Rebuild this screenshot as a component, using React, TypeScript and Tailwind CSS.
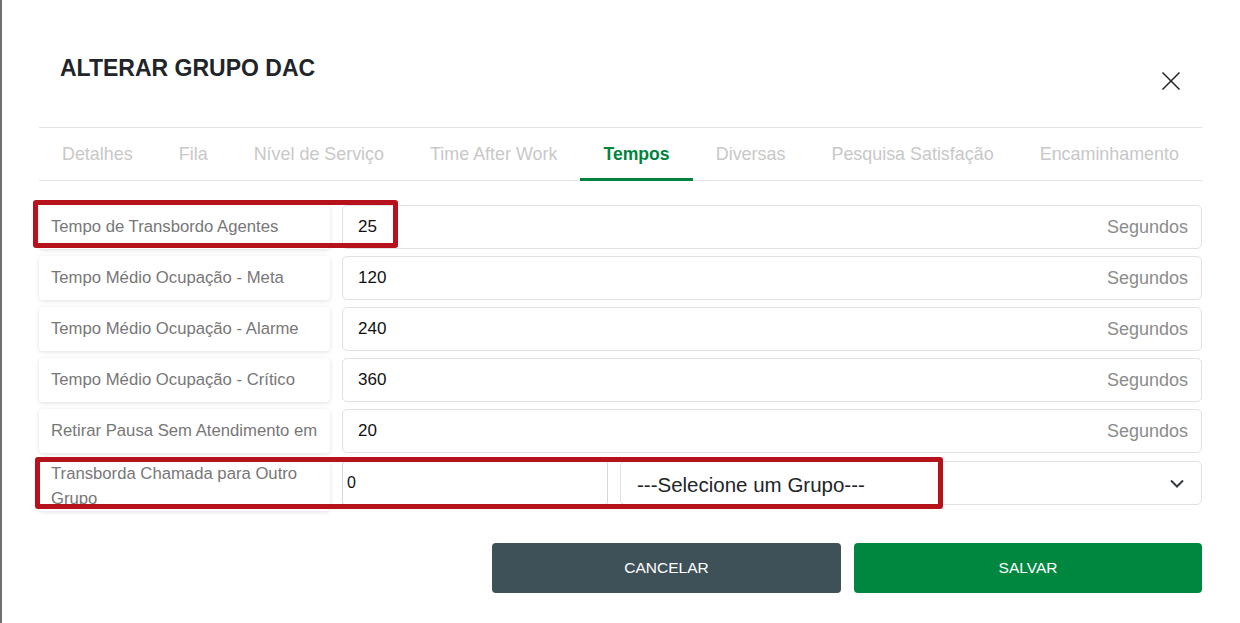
import React from "react";

const tabs = [
  "Detalhes",
  "Fila",
  "Nível de Serviço",
  "Time After Work",
  "Tempos",
  "Diversas",
  "Pesquisa Satisfação",
  "Encaminhamento",
];

const rows = [
  { label: "Tempo de Transbordo Agentes", value: "25" },
  { label: "Tempo Médio Ocupação - Meta", value: "120" },
  { label: "Tempo Médio Ocupação - Alarme", value: "240" },
  { label: "Tempo Médio Ocupação - Crítico", value: "360" },
  { label: "Retirar Pausa Sem Atendimento em", value: "20" },
];

export default function App() {
  return (
    <div className="relative flex h-[623px] w-[1240px] flex-col overflow-hidden border-l-2 border-[#707070] bg-white font-['Liberation_Sans',Arial,sans-serif]">
      <div className="flex h-[127px] items-start justify-between pl-[58px] pr-[59px] pt-[57px]">
        <h1 className="text-[23px] font-bold leading-none text-[#212529]">ALTERAR GRUPO DAC</h1>
        <button className="mt-[14px] text-[#212529]" aria-label="Fechar">
          <svg width="20" height="20" viewBox="0 0 20 20" fill="none" stroke="currentColor" strokeWidth="1.5">
            <path d="M1.5 1.5 L18.5 18.5 M18.5 1.5 L1.5 18.5" />
          </svg>
        </button>
      </div>

      <div className="ml-[37px] w-[1163px]">
        <div className="flex h-[54px] justify-between border-y border-[#e3e3e3]">
          {tabs.map((t) => {
            const active = t === "Tempos";
            return (
              <div
                key={t}
                className={
                  active
                    ? "-mb-px flex items-center border-b-[3px] border-[#00843d] px-[23px] pt-[3px] text-[17.6px] font-bold text-[#00843d]"
                    : "flex items-center px-[23px] text-[17.9px] text-[#c8c8c8]"
                }
              >
                {t}
              </div>
            );
          })}
        </div>

        <div className="relative mt-[24px] flex flex-col gap-[7px]">
          {rows.map((r) => (
            <div key={r.label} className="flex h-[44px] gap-[12px]">
              <div className="flex w-[291px] items-center rounded-[4px] bg-white pl-[12px] text-[16.7px] text-[#777777] shadow-[0_1px_4px_rgba(0,0,0,0.13)]">
                {r.label}
              </div>
              <div className="flex flex-1 items-center justify-between rounded-[5px] border border-[#dfe2e6] pl-[15px] pr-[13px]">
                <span className="text-[17px] text-[#111111]">{r.value}</span>
                <span className="text-[18px] text-[#8c8c8c]">Segundos</span>
              </div>
            </div>
          ))}

          <div className="mt-[1px] flex items-start gap-[12px]">
            <div className="h-[50px] w-[291px] overflow-hidden rounded-[4px] bg-white pl-[12px] text-[16.7px] leading-[25px] text-[#777777] shadow-[0_1px_4px_rgba(0,0,0,0.13)]">
              Transborda Chamada para Outro Grupo
            </div>
            <div className="flex h-[44px] w-[266px] items-center rounded-[3px] border border-[#d4d8dd] pl-[4px] text-[16px] text-[#111111]">
              0
            </div>
            <div className="flex h-[44px] flex-1 items-center justify-between rounded-[5px] border border-[#dfe2e6] pl-[16px] pr-[17px]">
              <span className="pt-[4px] text-[20.5px] text-[#212529]">---Selecione um Grupo---</span>
              <svg width="14" height="9" viewBox="0 0 14 9" fill="none" stroke="#343a40" strokeWidth="2">
                <path d="M1 1.5 L7 7.5 L13 1.5" />
              </svg>
            </div>
          </div>

          <div className="pointer-events-none absolute left-[-6px] top-[-5px] h-[48px] w-[365px] rounded-[3px] border-[5px] border-[#b5121b]" />
          <div className="pointer-events-none absolute left-[-4px] top-[252px] h-[52px] w-[908px] rounded-[3px] border-[5px] border-[#b5121b]" />
        </div>

        <div className="mt-[32px] flex justify-end gap-[13px]">
          <button className="h-[50px] w-[349px] rounded-[4px] bg-[#3e5058] text-[15.5px] text-white">CANCELAR</button>
          <button className="h-[50px] w-[348px] rounded-[4px] bg-[#00873f] text-[15.5px] text-white">SALVAR</button>
        </div>
      </div>
    </div>
  );
}
